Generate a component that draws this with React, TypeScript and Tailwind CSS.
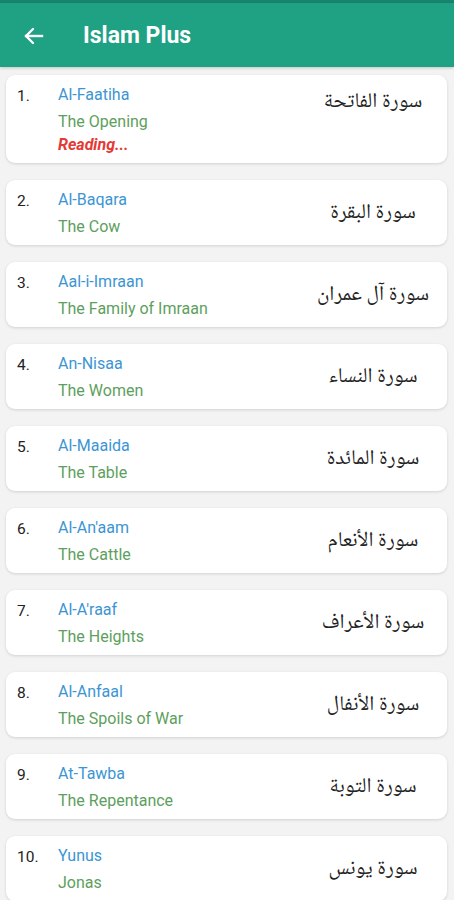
import React from "react";

const surahs = [
  { n: "1.", en: "Al-Faatiha", tr: "The Opening", ar: "سورة الفاتحة", reading: true },
  { n: "2.", en: "Al-Baqara", tr: "The Cow", ar: "سورة البقرة" },
  { n: "3.", en: "Aal-i-Imraan", tr: "The Family of Imraan", ar: "سورة آل عمران" },
  { n: "4.", en: "An-Nisaa", tr: "The Women", ar: "سورة النساء" },
  { n: "5.", en: "Al-Maaida", tr: "The Table", ar: "سورة المائدة" },
  { n: "6.", en: "Al-An'aam", tr: "The Cattle", ar: "سورة الأنعام" },
  { n: "7.", en: "Al-A'raaf", tr: "The Heights", ar: "سورة الأعراف" },
  { n: "8.", en: "Al-Anfaal", tr: "The Spoils of War", ar: "سورة الأنفال" },
  { n: "9.", en: "At-Tawba", tr: "The Repentance", ar: "سورة التوبة" },
  { n: "10.", en: "Yunus", tr: "Jonas", ar: "سورة يونس" },
];

export default function App() {
  return (
    <div
      className="w-[454px] h-[900px] overflow-hidden bg-[#f3f3f3]"
      style={{ fontFamily: "Roboto, 'Liberation Sans', sans-serif" }}
    >
      <div className="h-[3px] bg-[#17866c]" />
      <header className="h-[64px] bg-[#1fa184] flex items-center shadow-[0_1px_3px_rgba(0,0,0,0.2)]">
        <div className="w-[83px] flex items-center pl-[23px] pt-[1px]">
          <svg width="21" height="18" viewBox="0 0 21 18" fill="none" stroke="white" strokeWidth="2.4" strokeLinecap="square">
            <path d="M3 9H19" />
            <path d="M10 2L3 9L10 16" strokeLinecap="round" strokeLinejoin="round" />
          </svg>
        </div>
        <h1 className="text-white text-[23px] font-bold pt-[2px]">Islam Plus</h1>
      </header>
      <div className="flex flex-col gap-[17px] pt-[8px] pl-[6px] pr-[7px]">
        {surahs.map((s) => (
          <div
            key={s.n}
            className="bg-white rounded-[9px] shadow-[0_1px_3px_rgba(0,0,0,0.14)] flex pt-[10px] pb-[8px]"
          >
            <div className="w-[52px] pl-[11px] pt-[1px] text-[15.5px] leading-[20px] text-[#222]">{s.n}</div>
            <div className="flex-1 flex flex-col">
              <div className="text-[16px] leading-[20px] text-[#3c95d3]">{s.en}</div>
              <div className="mt-[7px] text-[16px] leading-[20px] text-[#5da05d]">{s.tr}</div>
              {s.reading && (
                <div className="mt-[3px] text-[16px] leading-[20px] text-[#e53935] font-bold italic">
                  Reading...
                </div>
              )}
            </div>
            <div
              className={`w-[148px] flex justify-center ${s.reading ? "items-start pt-[4px]" : "items-center"}`}
            >
              <span
                dir="rtl"
                className="text-[21px] leading-[28px] text-[#222]"
                style={{ fontFamily: "'Noto Naskh Arabic', 'Noto Sans Arabic', 'DejaVu Sans', sans-serif" }}
              >
                {s.ar}
              </span>
            </div>
          </div>
        ))}
      </div>
    </div>
  );
}
